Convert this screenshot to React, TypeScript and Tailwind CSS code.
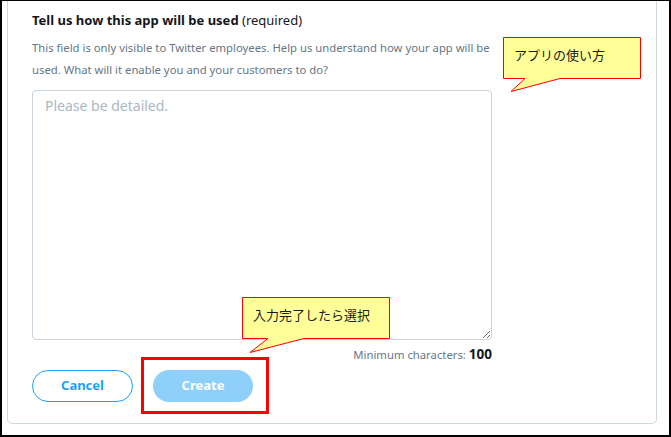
import React from "react";

export default function App() {
  const font = { fontFamily: '"Noto Sans", "Open Sans", sans-serif' };
  return (
    <div
      className="relative w-[671px] h-[437px] bg-white border-black border-x-2 border-t border-b-2 overflow-hidden"
      style={font}
    >
      <div className="ml-[5px] w-[650px] h-[423px] border-x border-b border-[#cfd9e0] rounded-b-[5px] pl-[24px] pt-[9px]">
        <div className="text-[13px] leading-[20px] text-[#14171a]">
          <span className="font-bold">Tell us how this app will be used</span>{" "}
          <span>(required)</span>
        </div>
        <p className="mt-[7px] w-[470px] text-[11.3px] leading-[22px] text-[#657786]">
          This field is only visible to Twitter employees. Help us understand how your app will be
          <br />
          used. What will it enable you and your customers to do?
        </p>
        <textarea
          className="mt-[9px] block w-[460px] h-[250px] border border-[#c8d3dc] rounded-[4px] pl-[12px] pt-[5px] text-[14px] leading-[20px] placeholder:text-[#aab8c2] outline-none"
          placeholder="Please be detailed."
          style={font}
        />
        <div className="mt-[4px] w-[460px] text-right text-[11.3px] leading-[20px] text-[#657786]">
          Minimum characters: <span className="font-bold text-[13.5px] text-[#14171a]">100</span>
        </div>
        <div className="mt-[5px] flex gap-[20px]">
          <button className="w-[101px] h-[32px] rounded-full border border-[#1da1f2] text-[#1da1f2] font-bold text-[13px] bg-white">
            Cancel
          </button>
          <button className="w-[100px] h-[32px] rounded-full bg-[#8ed0f9] text-white font-bold text-[13px]">
            Create
          </button>
        </div>
      </div>

      <svg
        className="absolute left-[-2px] top-[-1px] pointer-events-none"
        width="671"
        height="437"
        viewBox="0 0 671 437"
      >
        <path
          d="M503.5 37.5 H640.5 V78.5 H560 L511 91.5 L525 78.5 H503.5 Z"
          fill="#ffff99"
          stroke="#ff0000"
          strokeWidth="1"
        />
        <path
          d="M242.5 297.5 H389.5 V338.5 H304 L250 352.5 L268 338.5 H242.5 Z"
          fill="#ffff99"
          stroke="#ff0000"
          strokeWidth="1"
        />
      </svg>
      <div
        className="absolute left-[512px] top-[44px] text-[13px] leading-[20px] text-[#1a1a1a]"
        style={{ fontFamily: '"Noto Sans CJK JP", sans-serif' }}
      >
        アプリの使い方
      </div>
      <div
        className="absolute left-[251px] top-[304px] text-[13px] leading-[20px] text-[#1a1a1a]"
        style={{ fontFamily: '"Noto Sans CJK JP", sans-serif' }}
      >
        入力完了したら選択
      </div>
      <div className="absolute left-[139px] top-[356px] w-[128px] h-[57px] border-[3px] border-[#ff0000]" />
    </div>
  );
}
